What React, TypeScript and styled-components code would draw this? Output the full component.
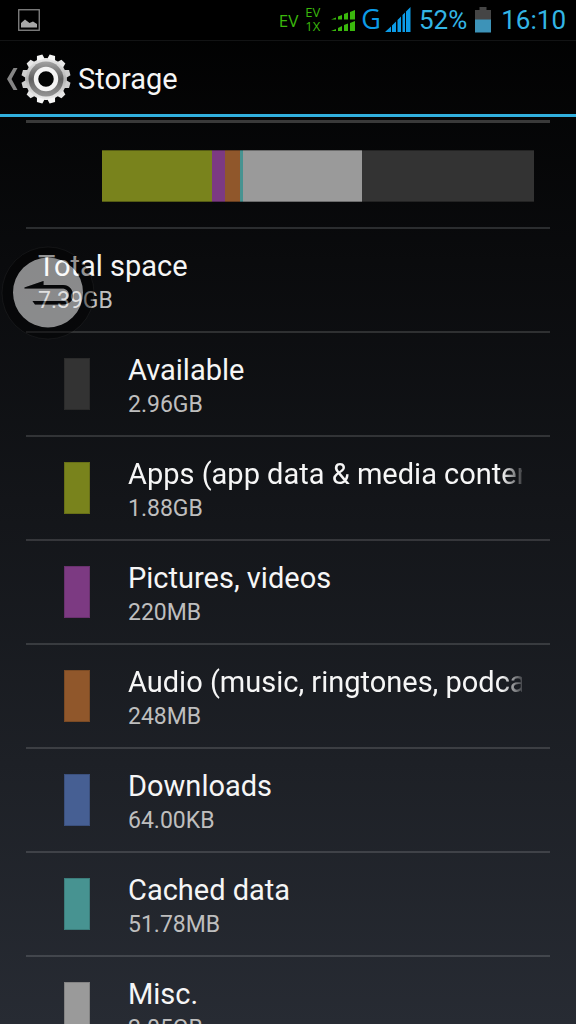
import React from "react";
import styled, { createGlobalStyle } from "styled-components";

const GlobalStyle = createGlobalStyle`
  * { box-sizing: border-box; }
  body { margin: 0; background: #000; }
`;

const Screen = styled.div`
  position: relative;
  display: flex;
  flex-direction: column;
  height: 100vh;
  overflow: hidden;
  color: #f6f6f6;
  font-family: Roboto, "Liberation Sans", sans-serif;
  background: linear-gradient(#000, #272b33);
`;

const StatusBar = styled.header`
  display: flex;
  flex: none;
  align-items: center;
  justify-content: space-between;
  height: 40px;
  padding: 0 10px 0 18px;
  background: #000;
`;

const StatusGroup = styled.div`
  display: flex;
  align-items: center;
`;

const NetworkLabel = styled.span`
  margin: 2px 7px 0 0;
  color: #3ab80c;
  font: 17px/20px "Open Sans", "Noto Sans", sans-serif;
`;

const NetworkStack = styled.span`
  display: flex;
  flex-direction: column;
  margin: 0 10px 3px 0;
  color: #3ab80c;
  font: 13px/14px "Open Sans", "Noto Sans", sans-serif;
  text-align: center;
`;

const DataType = styled.span`
  margin: 0 4px 2px 5px;
  color: #0c9be6;
  font: 27px/38px "Open Sans", "Noto Sans", sans-serif;
`;

const StatusText = styled.span`
  color: #33b5e5;
  font-size: 26px;
  line-height: 40px;
`;

const StatusIcon = styled.svg`
  display: block;
  flex: none;
`;

const Battery = styled(StatusIcon)`
  margin: 0 10px 0 8px;
`;

const PercentText = styled(StatusText)`
  margin-left: 8px;
`;

const ActionBar = styled.div`
  flex: none;
  height: 77px;
  border-top: 1px solid #121314;
  border-bottom: 3px solid #31b0de;
`;

const UpButton = styled.button`
  display: flex;
  align-items: center;
  height: 100%;
  padding: 3px 8px 0 6px;
  border: 0;
  background: none;
  color: inherit;
  font-family: inherit;
  cursor: pointer;
`;

const ScreenTitle = styled.h1`
  margin: 0 0 0 7px;
  font-size: 29px;
  font-weight: 400;
  line-height: 36px;
`;

const Content = styled.main`
  flex: 1;
  min-height: 0;
  padding: 3px 26px 0;
  overflow-y: auto;
  scrollbar-width: none;
`;

const UsageSection = styled.section`
  padding: 27px 16px 25px 76px;
  border-top: 3px solid #393939;
  border-bottom: 2px solid #2b2d2f;
`;

const UsageBar = styled.div`
  display: flex;
  height: 52px;
`;

const Segment = styled.div<{ $color: string; $share: number }>`
  flex: ${(p) => p.$share} 1 0;
  border: solid rgba(0, 0, 0, 0.3);
  border-width: 1px 0;
  background: ${(p) => p.$color};
`;

const List = styled.ul`
  margin: 0;
  padding: 0;
  list-style: none;
`;

const Row = styled.li<{ $indented?: boolean }>`
  display: flex;
  align-items: center;
  gap: 38px;
  height: 104px;
  padding: 0 28px 0 ${(p) => (p.$indented ? 38 : 12)}px;
  border-bottom: 2px solid rgba(255, 255, 255, 0.14);
`;

const Swatch = styled.span<{ $color: string }>`
  flex: none;
  width: 26px;
  height: 52px;
  border: 1px solid rgba(0, 0, 0, 0.15);
  background: ${(p) => p.$color};
`;

const RowText = styled.div`
  flex: 1;
  min-width: 0;
  padding-top: 4px;
`;

const RowTitle = styled.div<{ $faded?: boolean }>`
  overflow: hidden;
  font-size: 29px;
  line-height: 38px;
  white-space: nowrap;
  mask-image: ${(p) =>
    p.$faded ? "linear-gradient(to left, rgba(0, 0, 0, 0.2), #000 20px)" : "none"};
`;

const RowValue = styled.div`
  color: #bebebe;
  font-size: 23px;
  line-height: 32px;
`;

const FloatingBack = styled.button`
  position: absolute;
  top: 246px;
  left: 1px;
  width: 94px;
  height: 94px;
  padding: 0;
  border: 0;
  border-radius: 50%;
  background: none;
  cursor: pointer;
`;

const colors = {
  available: "#333333",
  apps: "#79831c",
  pictures: "#7c3a82",
  audio: "#90572b",
  downloads: "#465f93",
  cached: "#479391",
  misc: "#9a9a9a",
};

const segments = [
  { color: colors.apps, share: 110 },
  { color: colors.pictures, share: 13 },
  { color: colors.audio, share: 15 },
  { color: colors.cached, share: 3 },
  { color: colors.misc, share: 119 },
  { color: colors.available, share: 172 },
];

const rows = [
  { title: "Available", value: "2.96GB", color: colors.available },
  { title: "Apps (app data & media content)", value: "1.88GB", color: colors.apps, faded: true },
  { title: "Pictures, videos", value: "220MB", color: colors.pictures },
  { title: "Audio (music, ringtones, podcasts etc.)", value: "248MB", color: colors.audio, faded: true },
  { title: "Downloads", value: "64.00KB", color: colors.downloads },
  { title: "Cached data", value: "51.78MB", color: colors.cached },
  { title: "Misc.", value: "2.05GB", color: colors.misc },
];

const teeth = Array.from({ length: 12 }, (_, i) => 15 + i * 30);

function GearIcon() {
  return (
    <StatusIcon width="50" height="50" viewBox="-25 -25 50 50" aria-hidden="true">
      <defs>
        <linearGradient id="gearBody" gradientUnits="userSpaceOnUse" x1="0" y1="-25" x2="0" y2="25">
          <stop offset="0" stopColor="#f4f4f4" />
          <stop offset="0.5" stopColor="#b4b4b4" />
          <stop offset="1" stopColor="#fafafa" />
        </linearGradient>
        <linearGradient id="gearRing" x1="0" y1="0" x2="0" y2="1">
          <stop offset="0" stopColor="#a2a2a2" />
          <stop offset="0.5" stopColor="#606060" />
          <stop offset="1" stopColor="#969696" />
        </linearGradient>
      </defs>
      <g fill="url(#gearBody)">
        <circle r="21" />
      </g>
      {teeth.map((a) => {
        const shade = Math.round(190 + 58 * Math.abs(Math.cos((a * Math.PI) / 180)));
        return (
          <path
            key={a}
            d="M-4 -20 L-2.800 -24.600 H2.800 L4 -20Z"
            fill={`rgb(${shade},${shade},${shade})`}
            transform={`rotate(${a})`}
          />
        );
      })}
      <circle r="17.500" fill="url(#gearRing)" />
      <circle r="10" fill="#020303" stroke="#f4f4f4" strokeWidth="4.500" />
    </StatusIcon>
  );
}

export default function App() {
  return (
    <Screen>
      <GlobalStyle />
      <StatusBar>
        <StatusIcon width="22" height="22" viewBox="0 0 22 22" aria-label="Picture saved">
          <rect x="0.750" y="0.750" width="20.500" height="20.500" fill="none" stroke="#858585" strokeWidth="1.300" />
          <path d="M3 18.500V14L7 10.500L11.500 14L15 12.500L19 15V18.500Z" fill="#a8a8a8" />
        </StatusIcon>
        <StatusGroup>
          <NetworkLabel>EV</NetworkLabel>
          <NetworkStack>
            <span>EV</span>
            <span>1X</span>
          </NetworkStack>
          <StatusIcon width="26" height="22" viewBox="0 -1 26 22" aria-label="Signal strength">
            <path
              fill="#3ab80c"
              d="M1 9.500L6 7.500V9.500ZM8 6.500L12 5V9.500H8ZM14 4L18 2.500V9.500H14ZM20 2L25 0V9.500H20ZM1 21L6 19V21ZM8 18L12 16V21H8ZM14 15L18 13.500V21H14ZM20 13L25 11V21H20Z"
            />
          </StatusIcon>
          <DataType>G</DataType>
          <StatusIcon width="26" height="26" viewBox="0 0 26 26" aria-label="Data signal">
            <path
              fill="#0c9be6"
              d="M0 25L6 19.500V25ZM7 18.500L11 14.500V25H7ZM12.500 13L16 9.500V25H12.500ZM17.500 8L20 5.500V25H17.500ZM21 4.500L25.500 0V25H21Z"
            />
          </StatusIcon>
          <PercentText>52%</PercentText>
          <Battery width="16" height="26" viewBox="0 0 16 26" aria-label="Battery">
            <path d="M0 3H4.500V0H11.500V3H16V13H0Z" fill="#454545" />
            <path d="M0 12.500H16V25.500H0Z" fill="#3d93b8" />
          </Battery>
          <StatusText>16:10</StatusText>
        </StatusGroup>
      </StatusBar>

      <ActionBar>
        <UpButton type="button" aria-label="Navigate up, Storage">
          <StatusIcon width="15" height="26" viewBox="0 0 15 26" aria-hidden="true">
            <path d="M7.500 2H11.500L5.500 13L11.500 24H7.500L1 13Z" fill="#858585" />
          </StatusIcon>
          <GearIcon />
          <ScreenTitle>Storage</ScreenTitle>
        </UpButton>
      </ActionBar>

      <Content>
        <UsageSection aria-label="Storage usage">
          <UsageBar>
            {segments.map((s) => (
              <Segment key={s.color} $color={s.color} $share={s.share} />
            ))}
          </UsageBar>
        </UsageSection>
        <List>
          <Row>
            <RowText>
              <RowTitle>Total space</RowTitle>
              <RowValue>7.39GB</RowValue>
            </RowText>
          </Row>
          {rows.map((r) => (
            <Row key={r.title} $indented>
              <Swatch $color={r.color} />
              <RowText>
                <RowTitle $faded={r.faded}>{r.title}</RowTitle>
                <RowValue>{r.value}</RowValue>
              </RowText>
            </Row>
          ))}
        </List>
      </Content>

      <FloatingBack type="button" aria-label="Back">
        <svg width="94" height="94" viewBox="0 0 94 94" aria-hidden="true">
          <path
            fill="#000"
            fillOpacity="0.4"
            fillRule="evenodd"
            d="M1 47a46 46 0 1 0 92 0a46 46 0 1 0 -92 0ZM12 46.500a35 35 0 1 0 70 0a35 35 0 1 0 -70 0Z"
          />
          <circle cx="47" cy="47" r="46" fill="none" stroke="#fff" strokeOpacity="0.05" />
          <path
            fill="#fff"
            fillOpacity="0.52"
            fillRule="evenodd"
            d="M12 46.500a35 35 0 1 0 70 0a35 35 0 1 0 -70 0ZM23.500 41.500L42.500 35V39H62C68 39 72 43.500 72 49.500C72 55 68 58.500 62 58.500H34L31.500 55H61C65 55 68 53 68 49C68 45 65 42.500 61 42.500H23.500Z"
          />
          <path
            fill="#000"
            fillOpacity="0.4"
            d="M23.500 41.500L42.500 35V39H62C68 39 72 43.500 72 49.500C72 55 68 58.500 62 58.500H34L31.500 55H61C65 55 68 53 68 49C68 45 65 42.500 61 42.500H23.500Z"
          />
        </svg>
      </FloatingBack>
    </Screen>
  );
}
